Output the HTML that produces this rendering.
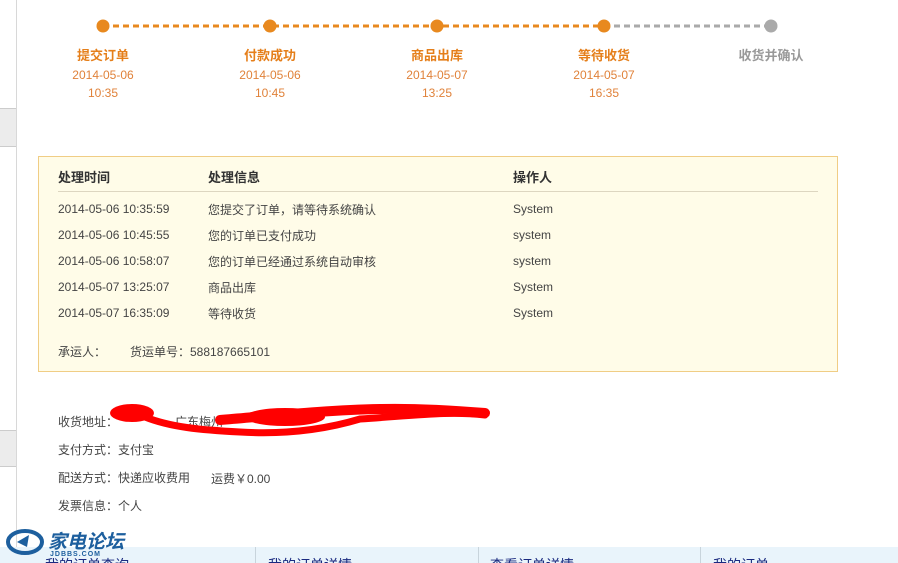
<!DOCTYPE html>
<html><head><meta charset="utf-8"><style>
*{margin:0;padding:0}
html,body{width:898px;height:563px;overflow:hidden}
body{position:relative;background:#fff;font-family:"Liberation Sans","Noto Sans CJK SC",sans-serif;font-size:12px;color:#444}
.a{position:absolute;white-space:nowrap}
.lbl{font-weight:bold;font-size:13px;color:#e57f1b;width:120px;text-align:center}
.d{font-size:12px;color:#e0823a;width:120px;text-align:center}
.box{position:absolute;left:38px;top:156px;width:798px;height:214px;background:#fffce8;border:1px solid #f0cd85}
.h{font-weight:bold;font-size:13px;color:#333}
</style></head><body>
<div class="a" style="left:0;top:0;width:16px;height:563px;border-right:1px solid #d8d8d8;background:#fff"></div>
<div class="a" style="left:0;top:108px;width:16px;height:37px;background:#ececec;border-top:1px solid #ccc;border-bottom:1px solid #ccc"></div>
<div class="a" style="left:0;top:430px;width:16px;height:35px;background:#ececec;border-top:1px solid #ccc;border-bottom:1px solid #ccc"></div>

<svg class="a" style="left:0;top:0" width="898" height="50">
<line x1="103" y1="26" x2="604" y2="26" stroke="#e8891f" stroke-width="3" stroke-dasharray="6,4"/>
<line x1="604" y1="26" x2="771" y2="26" stroke="#aaa" stroke-width="3" stroke-dasharray="6,4"/>
<circle cx="103" cy="26" r="6.5" fill="#e8891f"/>
<circle cx="270" cy="26" r="6.5" fill="#e8891f"/>
<circle cx="437" cy="26" r="6.5" fill="#e8891f"/>
<circle cx="604" cy="26" r="6.5" fill="#e8891f"/>
<circle cx="771" cy="26" r="6.5" fill="#aaa"/>
</svg>

<div class="a lbl" style="left:43px;top:45px">提交订单</div>
<div class="a d" style="left:43px;top:68px">2014-05-06</div>
<div class="a d" style="left:43px;top:86px">10:35</div>
<div class="a lbl" style="left:210px;top:45px">付款成功</div>
<div class="a d" style="left:210px;top:68px">2014-05-06</div>
<div class="a d" style="left:210px;top:86px">10:45</div>
<div class="a lbl" style="left:377px;top:45px">商品出库</div>
<div class="a d" style="left:377px;top:68px">2014-05-07</div>
<div class="a d" style="left:377px;top:86px">13:25</div>
<div class="a lbl" style="left:544px;top:45px">等待收货</div>
<div class="a d" style="left:544px;top:68px">2014-05-07</div>
<div class="a d" style="left:544px;top:86px">16:35</div>
<div class="a lbl" style="left:711px;top:45px;color:#999">收货并确认</div>

<div class="box"></div>
<div class="a h" style="left:58px;top:167px">处理时间</div>
<div class="a h" style="left:208px;top:167px">处理信息</div>
<div class="a h" style="left:513px;top:167px">操作人</div>
<div class="a" style="left:58px;top:191px;width:760px;border-top:1px solid #ddd6c0"></div>

<div class="a" style="left:58px;top:202px">2014-05-06 10:35:59</div><div class="a" style="left:208px;top:201px">您提交了订单，请等待系统确认</div><div class="a" style="left:513px;top:202px">System</div>
<div class="a" style="left:58px;top:228px">2014-05-06 10:45:55</div><div class="a" style="left:208px;top:227px">您的订单已支付成功</div><div class="a" style="left:513px;top:228px">system</div>
<div class="a" style="left:58px;top:254px">2014-05-06 10:58:07</div><div class="a" style="left:208px;top:253px">您的订单已经通过系统自动审核</div><div class="a" style="left:513px;top:254px">system</div>
<div class="a" style="left:58px;top:280px">2014-05-07 13:25:07</div><div class="a" style="left:208px;top:279px">商品出库</div><div class="a" style="left:513px;top:280px">System</div>
<div class="a" style="left:58px;top:306px">2014-05-07 16:35:09</div><div class="a" style="left:208px;top:305px">等待收货</div><div class="a" style="left:513px;top:306px">System</div>
<div class="a" style="left:58px;top:343px">承运人：</div><div class="a" style="left:130px;top:343px">货运单号：588187665101</div>

<div class="a" style="left:58px;top:413px">收货地址：</div>
<div class="a" style="left:175px;top:413px">广东梅州</div>
<svg class="a" style="left:100px;top:395px" width="400" height="50">
<ellipse cx="32" cy="18" rx="22" ry="9" fill="#f00"/>
<path d="M45 22 C70 32 100 35 140 37 C190 40 230 33 260 24 C320 20 350 16 385 20" stroke="#f00" stroke-width="7" fill="none" stroke-linecap="round"/>
<path d="M120 25 C180 20 230 15 280 14 C320 13 360 16 385 18" stroke="#f00" stroke-width="10" fill="none" stroke-linecap="round"/>
<ellipse cx="185" cy="22" rx="40" ry="9" fill="#f00"/>
</svg>
<div class="a" style="left:58px;top:441px">支付方式：支付宝</div>
<div class="a" style="left:58px;top:469px">配送方式：快递应收费用</div><div class="a" style="left:211px;top:470px">运费￥0.00</div>
<div class="a" style="left:58px;top:497px">发票信息：个人</div>

<div class="a" style="left:0;top:547px;width:898px;height:16px;background:#e9f4fb"></div>
<div class="a" style="left:255px;top:547px;height:16px;border-left:1px solid #c8d4dc"></div>
<div class="a" style="left:478px;top:547px;height:16px;border-left:1px solid #c8d4dc"></div>
<div class="a" style="left:700px;top:547px;height:16px;border-left:1px solid #c8d4dc"></div>
<div class="a" style="left:45px;top:555px;font-size:14px;color:#1a2a80">我的订单查询</div>
<div class="a" style="left:268px;top:555px;font-size:14px;color:#1a2a80">我的订单详情</div>
<div class="a" style="left:490px;top:555px;font-size:14px;color:#1a2a80">查看订单详情</div>
<div class="a" style="left:713px;top:555px;font-size:14px;color:#1a2a80">我的订单</div>
<svg class="a" style="left:5px;top:527px" width="40" height="30"><ellipse cx="20" cy="15" rx="17" ry="11" fill="none" stroke="#1d5f9e" stroke-width="4"/><path d="M12 15 L24 8 L22 20 Z" fill="#1d5f9e"/></svg>
<div class="a" style="left:48px;top:527px;font-size:19px;font-weight:bold;font-style:italic;color:#1d5f9e">家电论坛</div>
<div class="a" style="left:50px;top:551px;font-size:7px;font-weight:bold;color:#1d5f9e;letter-spacing:1px">JDBBS.COM</div>
</body></html>
